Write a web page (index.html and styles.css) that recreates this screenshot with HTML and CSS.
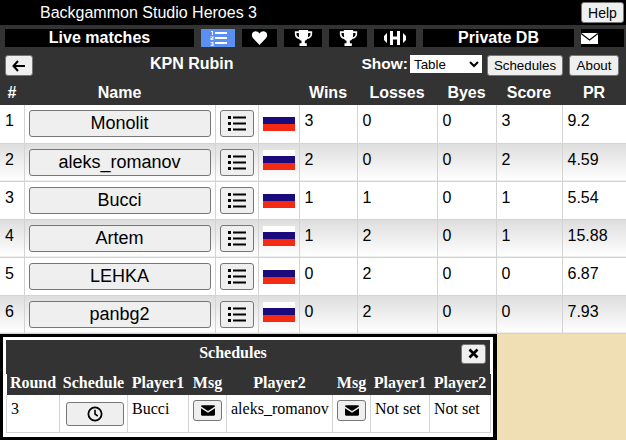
FILE: index.html
```html
<!DOCTYPE html>
<html lang="en">
<head>
    <meta charset="UTF-8">
    <meta name="viewport" content="width=device-width, initial-scale=1.0">
    <title>Backgammon Studio Heroes 3</title>
    <link rel="stylesheet" href="styles.css">
</head>
<body>
    <svg class="defs" width="0" height="0">
        <symbol id="i-ol" viewBox="0 0 17 15">
            <path d="M1 0h2v4H2V1H1zM.5 5.500h3v2.200H2v.5h1.500V9H.5V7h1.500v-.7H.5zM.5 11h3v4h-3v-.8H2.500v-.7H1.200v-.7H2.500v-1H.5zM5 1h12v2H5zM5 6h12v2H5zM5 11h12v2H5z"/>
        </symbol>
        <symbol id="i-list" viewBox="0 0 18 15">
            <path d="M0 0h3v3H0zM0 6h3v3H0zM0 12h3v3H0zM5 .5h13v2H5zM5 6.500h13v2H5zM5 12.500h13v2H5z"/>
        </symbol>
        <symbol id="i-heart" viewBox="0 0 24 22">
            <path d="M12 22 2 11.500C-1 8-.5 3.500 2.500 1.500 5.500-.5 9.500.5 12 4c2.500-3.500 6.500-4.500 9.500-2.500 3 2 3.500 6.500.5 10z"/>
        </symbol>
        <symbol id="i-trophy" viewBox="0 0 26 24">
            <path d="M6 0h14v2h6v4c0 4-3 7-7.500 7.500-1 1.500-2 2.300-3.500 2.800V20h3v4H7v-4h3v-3.700c-1.500-.5-2.500-1.300-3.500-2.800C2 13 0 10 0 6V2h6zM2.500 4.500V6c0 2.500 1.500 4.200 4 5-.4-2-.5-4.200-.5-6.500zm21 0H20c0 2.300-.1 4.500-.5 6.500 2.500-.8 4-2.500 4-5z"/>
        </symbol>
        <symbol id="i-dumbbell" viewBox="0 0 22 14">
            <path d="M3 2 0 5v4l3 3zM6 0h3v5.500h4V0h3v14h-3V8.500H9V14H6zM19 2l3 3v4l-3 3z"/>
        </symbol>
        <symbol id="i-mail" viewBox="0 0 24 18">
            <path d="M2 0h20c1 0 2 1 2 2L12 10 0 2c0-1 1-2 2-2zM0 5l12 8 12-8v11c0 1-1 2-2 2H2c-1 0-2-1-2-2z"/>
        </symbol>
    </svg>

    <header class="top-bar">
        <span class="app-title">Backgammon Studio Heroes 3</span>
        <button class="btn">Help</button>
    </header>

    <nav class="nav-bar">
        <a class="nav-item nav-text nav-live">Live matches</a>
        <a class="nav-item nav-icon nav-active"><svg width="17" height="15"><use href="#i-ol"/></svg></a>
        <a class="nav-item nav-heart"><svg width="17" height="14"><use href="#i-heart"/></svg></a>
        <a class="nav-item nav-wide"><svg width="21" height="16"><use href="#i-trophy"/></svg></a>
        <a class="nav-item nav-wide"><svg width="21" height="16"><use href="#i-trophy"/></svg></a>
        <a class="nav-item nav-weights"><svg width="22" height="14"><use href="#i-dumbbell"/></svg></a>
        <a class="nav-item nav-text nav-db">Private DB</a>
        <a class="nav-item nav-mail">
            <svg width="17" height="11" viewBox="0 0 17 11"><rect width="17" height="11" fill="#fff"/><path d="M0 .5 8.500 7 17 .5" fill="none" stroke="#000" stroke-width="1.200"/></svg>
        </a>
    </nav>

    <section class="title-row">
        <button class="btn btn-back">
            <svg width="14" height="12" viewBox="0 0 14 12"><path d="M6 1 1.500 6 6 11M2 6h11" fill="none" stroke="#000" stroke-width="2"/></svg>
        </button>
        <h1 class="team-name">KPN Rubin</h1>
        <div class="title-tools">
            <label class="show-label">Show:</label>
            <select class="show-select"><option>Table</option></select>
            <button class="btn btn-schedules">Schedules</button>
            <button class="btn btn-about">About</button>
        </div>
    </section>

    <table class="standings">
        <colgroup>
            <col class="c-num"><col class="c-name"><col class="c-list"><col class="c-flag">
            <col class="c-wins"><col class="c-losses"><col class="c-byes"><col class="c-score"><col class="c-pr">
        </colgroup>
        <thead>
            <tr><th>#</th><th>Name</th><th></th><th></th><th>Wins</th><th>Losses</th><th>Byes</th><th>Score</th><th>PR</th></tr>
        </thead>
        <tbody id="rows"></tbody>
    </table>

    <div class="bottom">
        <section class="schedules">
            <div class="sched-head">
                <span class="sched-title">Schedules</span>
                <button class="btn btn-close">
                    <svg width="11" height="11" viewBox="0 0 11 11"><path d="M1.500 1.500l8 8M9.500 1.500l-8 8" stroke="#000" stroke-width="2.600"/></svg>
                </button>
            </div>
            <table class="sched-table">
                <colgroup>
                    <col class="s-round"><col class="s-sched"><col class="s-p1"><col class="s-msg">
                    <col class="s-p2"><col class="s-msg"><col class="s-a"><col class="s-b">
                </colgroup>
                <thead>
                    <tr><th>Round</th><th>Schedule</th><th>Player1</th><th>Msg</th><th>Player2</th><th>Msg</th><th>Player1</th><th>Player2</th></tr>
                </thead>
                <tbody>
                    <tr>
                        <td>3</td>
                        <td class="cell-clock">
                            <button class="btn btn-clock">
                                <svg width="16" height="16" viewBox="0 0 16 16"><circle cx="8" cy="8" r="6.600" fill="none" stroke="#000" stroke-width="1.800"/><path d="M8 3.800V8l2.800 2.200" fill="none" stroke="#000" stroke-width="1.600"/></svg>
                            </button>
                        </td>
                        <td>Bucci</td>
                        <td class="cell-center"><button class="btn btn-msg"><svg width="14" height="11"><use href="#i-mail"/></svg></button></td>
                        <td>aleks_romanov</td>
                        <td class="cell-center"><button class="btn btn-msg"><svg width="14" height="11"><use href="#i-mail"/></svg></button></td>
                        <td>Not set</td>
                        <td>Not set</td>
                    </tr>
                </tbody>
            </table>
        </section>
    </div>

    <script>
        const players = [
            ["Monolit", 3, 0, 0, 3, "9.2"],
            ["aleks_romanov", 2, 0, 0, 2, "4.59"],
            ["Bucci", 1, 1, 0, 1, "5.54"],
            ["Artem", 1, 2, 0, 1, "15.88"],
            ["LEHKA", 0, 2, 0, 0, "6.87"],
            ["panbg2", 0, 2, 0, 0, "7.93"]
        ];

        // Build the standings rows
        document.getElementById("rows").innerHTML = players.map((p, i) => `
            <tr>
                <td>${i + 1}</td>
                <td class="cell-center"><button class="btn btn-player">${p[0]}</button></td>
                <td class="cell-center"><button class="btn btn-list"><svg width="18" height="15"><use href="#i-list"/></svg></button></td>
                <td class="cell-flag"><span class="flag"></span></td>
                <td>${p[1]}</td><td>${p[2]}</td><td>${p[3]}</td><td>${p[4]}</td><td>${p[5]}</td>
            </tr>`).join("");
    </script>
</body>
</html>
```

FILE: styles.css
```css
body {
    font-family: 'Liberation Sans', Arial, sans-serif;
    margin: 0;
    padding: 0;
    width: 626px;
    height: 440px;
    overflow: hidden;
    background-color: #f0deb4;
    color: #000;
}
.defs {
    position: absolute;
}
.btn {
    font-family: 'Liberation Sans', Arial, sans-serif;
    font-size: 13.333px;
    color: #000;
    background: #efefef;
    border: 1px solid #767676;
    border-radius: 3px;
    padding: 1px 6px;
    box-sizing: border-box;
    height: 21px;
    display: inline-flex;
    align-items: center;
    justify-content: center;
    vertical-align: top;
}
.top-bar {
    background: #000;
    height: 25px;
    display: flex;
    justify-content: space-between;
    align-items: center;
    padding: 0 2px 0 40px;
}
.app-title {
    color: #fff;
    font-size: 16px;
}
.top-bar .btn {
    width: 43px;
    height: 21px;
    font-size: 14px;
}
.nav-bar {
    background: #333;
    height: 22px;
    padding: 4px 0 0 5px;
    box-sizing: border-box;
    display: flex;
    gap: 7px;
}
.nav-item {
    background: #000;
    color: #fff;
    height: 18px;
    display: flex;
    align-items: center;
    justify-content: center;
    fill: #fff;
}
.nav-text {
    font-size: 16px;
    font-weight: bold;
}
.nav-live {
    width: 189px;
}
.nav-active {
    background: #5b8ff0;
    width: 34px;
}
.nav-heart {
    width: 35px;
}
.nav-wide {
    width: 38px;
}
.nav-weights {
    width: 42px;
}
.nav-db {
    width: 151px;
}
.nav-mail {
    width: 43px;
    justify-content: flex-start;
}
.title-row {
    background: #333;
    height: 32px;
    box-sizing: border-box;
    display: flex;
    align-items: flex-start;
    padding: 8px 7px 0 5px;
    color: #fff;
}
.btn-back {
    width: 28px;
    height: 21px;
    padding: 0;
}
.team-name {
    margin: 0 0 0 117px;
    font-size: 16px;
    line-height: 18px;
}
.title-tools {
    display: flex;
    align-items: flex-start;
    margin-left: auto;
}
.show-label {
    font-size: 15.5px;
    font-weight: bold;
    line-height: 18px;
    margin-right: 2px;
}
.show-select {
    font-family: 'Liberation Sans', Arial, sans-serif;
    font-size: 13.333px;
    width: 72px;
    height: 18px;
    margin-right: 5px;
    background: #fff;
    border: 0;
    border-radius: 0;
}
.btn-schedules {
    width: 76px;
    margin-right: 6px;
}
.btn-about {
    width: 50px;
}
.standings {
    border-collapse: collapse;
    table-layout: fixed;
    width: 626px;
    background: #fff;
}
.c-num { width: 24px; }
.c-name { width: 191px; }
.c-list { width: 43px; }
.c-flag { width: 41px; }
.c-wins { width: 58px; }
.c-losses { width: 80px; }
.c-byes { width: 59px; }
.c-score { width: 66px; }
.c-pr { width: 64px; }
.standings th {
    background: #333;
    color: #fff;
    font-size: 16px;
    height: 26px;
    padding: 1px 0 0;
    box-sizing: border-box;
}
.standings td {
    border: 1px solid #d3d3d3;
    border-top: 0;
    height: 38px;
    padding: 7px 0 0 5px;
    box-sizing: border-box;
    vertical-align: top;
    font-size: 16px;
    line-height: 18px;
}
.standings td:first-child {
    border-left: 0;
}
.standings tbody tr:nth-child(even) td {
    background: linear-gradient(#ddd, #fff);
}
.standings td.cell-center {
    text-align: center;
    padding: 5px 0 0;
}
.standings td.cell-flag {
    padding: 6px 0 0;
    text-align: center;
}
.btn-player {
    width: 182px;
    height: 27px;
    font-size: 18px;
}
.btn-list {
    width: 34px;
    height: 27px;
    padding: 0;
}
.flag {
    display: block;
    width: 32px;
    height: 20px;
    margin: 0 auto;
    background: linear-gradient(#fff 30%, #1a0a7c 30%, #1a0a7c 65%, #f42a12 65%);
}
.bottom {
    width: 497px;
    height: 106px;
    box-sizing: border-box;
    border: 3px solid #000;
    border-right-width: 4px;
    background: #fff;
    padding: 3px;
    font-family: 'Liberation Serif', 'Times New Roman', serif;
    overflow: hidden;
}
.schedules {
    width: 484px;
}
.sched-head {
    background: #333;
    color: #fff;
    height: 34px;
    box-sizing: border-box;
    padding: 4px 30px 0 0;
    text-align: center;
    position: relative;
    font-weight: bold;
    font-size: 16px;
    line-height: 18px;
}
.btn-close {
    position: absolute;
    right: 4px;
    top: 4px;
    width: 25px;
    height: 20px;
    padding: 0;
}
.sched-table {
    border-collapse: collapse;
    table-layout: fixed;
    width: 484px;
    font-size: 16px;
    line-height: 18px;
}
.s-round { width: 53px; }
.s-sched { width: 68px; }
.s-p1 { width: 61px; }
.s-msg { width: 38px; }
.s-p2 { width: 106px; }
.s-a { width: 59px; }
.s-b { width: 61px; }
.sched-table th {
    background: #333;
    color: #fff;
    height: 21px;
    padding: 0;
    vertical-align: top;
    white-space: nowrap;
    font-size: 16px;
}
.sched-table td {
    border: 1px solid #d3d3d3;
    border-top: 0;
    height: 38px;
    padding: 5px 0 0 4px;
    box-sizing: border-box;
    vertical-align: top;
    white-space: nowrap;
}
.sched-table td.cell-center {
    text-align: center;
    padding: 5px 0 0;
}
.sched-table td.cell-clock {
    text-align: center;
    padding: 7px 0 0 2px;
}
.btn-clock {
    width: 58px;
    height: 24px;
    padding: 0;
}
.btn-msg {
    width: 29px;
    height: 21px;
    padding: 0;
}
```
